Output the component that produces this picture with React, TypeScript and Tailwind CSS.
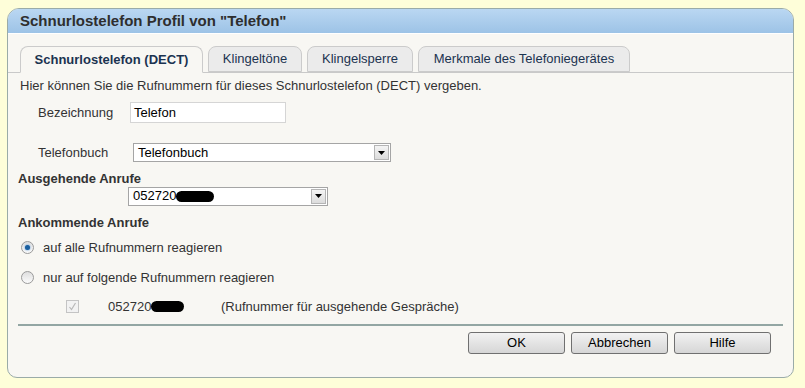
import React from "react";

const tabs = [
  { label: "Schnurlostelefon (DECT)", w: "w-[183px]", active: true },
  { label: "Klingeltöne", w: "w-[94px]", active: false },
  { label: "Klingelsperre", w: "w-[106px]", active: false },
  { label: "Merkmale des Telefoniegerätes", w: "w-[212px]", active: false },
];

function Redacted({ w }: { w: string }) {
  return <span className={`inline-block h-[11px] ${w} rounded-full bg-black align-[-1px]`} />;
}

function SelectBox({ className, children }: { className: string; children: React.ReactNode }) {
  return (
    <div className={`flex shrink-0 items-stretch border border-[#a5a5a5] bg-white ${className}`}>
      <div className="flex flex-1 items-center pl-[4px] text-black">{children}</div>
      <div className="m-[1px] flex w-[15px] items-center justify-center border border-[#b5b5b5] bg-gradient-to-b from-[#f4f4f4] to-[#dcdcdc]">
        <svg width="7" height="4" viewBox="0 0 7 4">
          <polygon points="0,0 7,0 3.5,4" fill="#000" />
        </svg>
      </div>
    </div>
  );
}

function Radio({ checked }: { checked: boolean }) {
  return (
    <span className="flex h-[13px] w-[13px] items-center justify-center rounded-full border border-[#9a9a9a] bg-gradient-to-b from-[#dedede] to-[#fbfbfb]">
      {checked && <span className="h-[5px] w-[5px] rounded-full bg-[#1b5f9e] shadow-[0_0_2px_#3a8ad8]" />}
    </span>
  );
}

export default function App() {
  return (
    <div className="h-[388px] w-[805px] bg-[#fefed9] pl-[7px] pt-[8px] font-['Liberation_Sans',Arial,sans-serif] text-[13px] text-[#333]">
      <div className="flex h-[370px] w-[787px] flex-col overflow-hidden rounded-t-[12px] rounded-b-[10px] border border-[#9aaba8] bg-[#f8f7f3]">
        {/* Kopfzeile */}
        <div className="flex h-[25px] items-center border-b border-white bg-gradient-to-b from-[#bad7f2] to-[#9dc3e6] pl-[12px] text-[15px] font-bold text-[#2e2e2e]">
          Schnurlostelefon Profil von "Telefon"
        </div>

        {/* Reiter */}
        <div className="mt-[12px] flex h-[27px] items-end gap-[5px] border-b border-[#c9c9c9] pl-[12px]">
          {tabs.map((t) => (
            <div
              key={t.label}
              className={`flex h-[26px] items-center justify-center rounded-t-[8px] border border-[#cbcbcb] text-[13px] text-[#1b3350] ${t.w} ${
                t.active ? "-mb-px h-[27px] border-b-[#f8f7f3] bg-[#f8f7f3] font-bold" : "bg-[#ebebeb]"
              }`}
            >
              {t.label}
            </div>
          ))}
        </div>

        {/* Inhalt */}
        <div className="flex flex-1 flex-col px-[10px]">
          <p className="mt-[5px] pl-[2px] leading-[15px]">
            Hier können Sie die Rufnummern für dieses Schnurlostelefon (DECT) vergeben.
          </p>

          <div className="mt-[9px] flex items-center">
            <span className="w-[112px] shrink-0 pl-[20px]">Bezeichnung</span>
            <div className="flex h-[21px] w-[156px] items-center border border-[#d5d5d5] bg-white pl-[3px] text-black">
              Telefon
            </div>
          </div>

          <div className="mt-[20px] flex items-center">
            <span className="w-[115px] shrink-0 pl-[20px]">Telefonbuch</span>
            <SelectBox className="h-[19px] w-[258px]">Telefonbuch</SelectBox>
          </div>

          <div className="mt-[8px] font-bold leading-[15px]">Ausgehende Anrufe</div>
          <div className="mt-[1px] pl-[110px]">
            <SelectBox className="h-[19px] w-[200px]">
              052720
              <Redacted w="w-[38px]" />
            </SelectBox>
          </div>

          <div className="mt-[9px] font-bold leading-[15px]">Ankommende Anrufe</div>

          <div className="mt-[8px] flex items-center gap-[9px] pl-[3px]">
            <Radio checked />
            <span>auf alle Rufnummern reagieren</span>
          </div>
          <div className="mt-[11px] flex items-center gap-[9px] pl-[3px]">
            <Radio checked={false} />
            <span>nur auf folgende Rufnummern reagieren</span>
          </div>

          <div className="mt-[9px] flex items-center">
            <span className="ml-[48px] flex h-[13px] w-[13px] items-center justify-center border border-[#c4c4c4] bg-[#f2f2f2]">
              <svg width="9" height="9" viewBox="0 0 9 9">
                <path d="M1.5 5 L3.5 7.5 L7.5 1" fill="none" stroke="#b8b8b8" strokeWidth="1.2" />
              </svg>
            </span>
            <span className="ml-[29px] w-[113px]">
              052720
              <Redacted w="w-[33px]" />
            </span>
            <span>(Rufnummer für ausgehende Gespräche)</span>
          </div>

          <div className="mt-[8px] h-[2px] bg-[#93a6a3]" />

          <div className="mt-[6px] flex justify-end gap-[6px] pr-[12px]">
            {["OK", "Abbrechen", "Hilfe"].map((b) => (
              <button
                key={b}
                className="h-[22px] w-[97px] rounded-[3px] border border-[#707070] bg-gradient-to-b from-[#f2f2f2] to-[#d6d6d6] text-[13px] text-black"
              >
                {b}
              </button>
            ))}
          </div>
        </div>
      </div>
    </div>
  );
}
